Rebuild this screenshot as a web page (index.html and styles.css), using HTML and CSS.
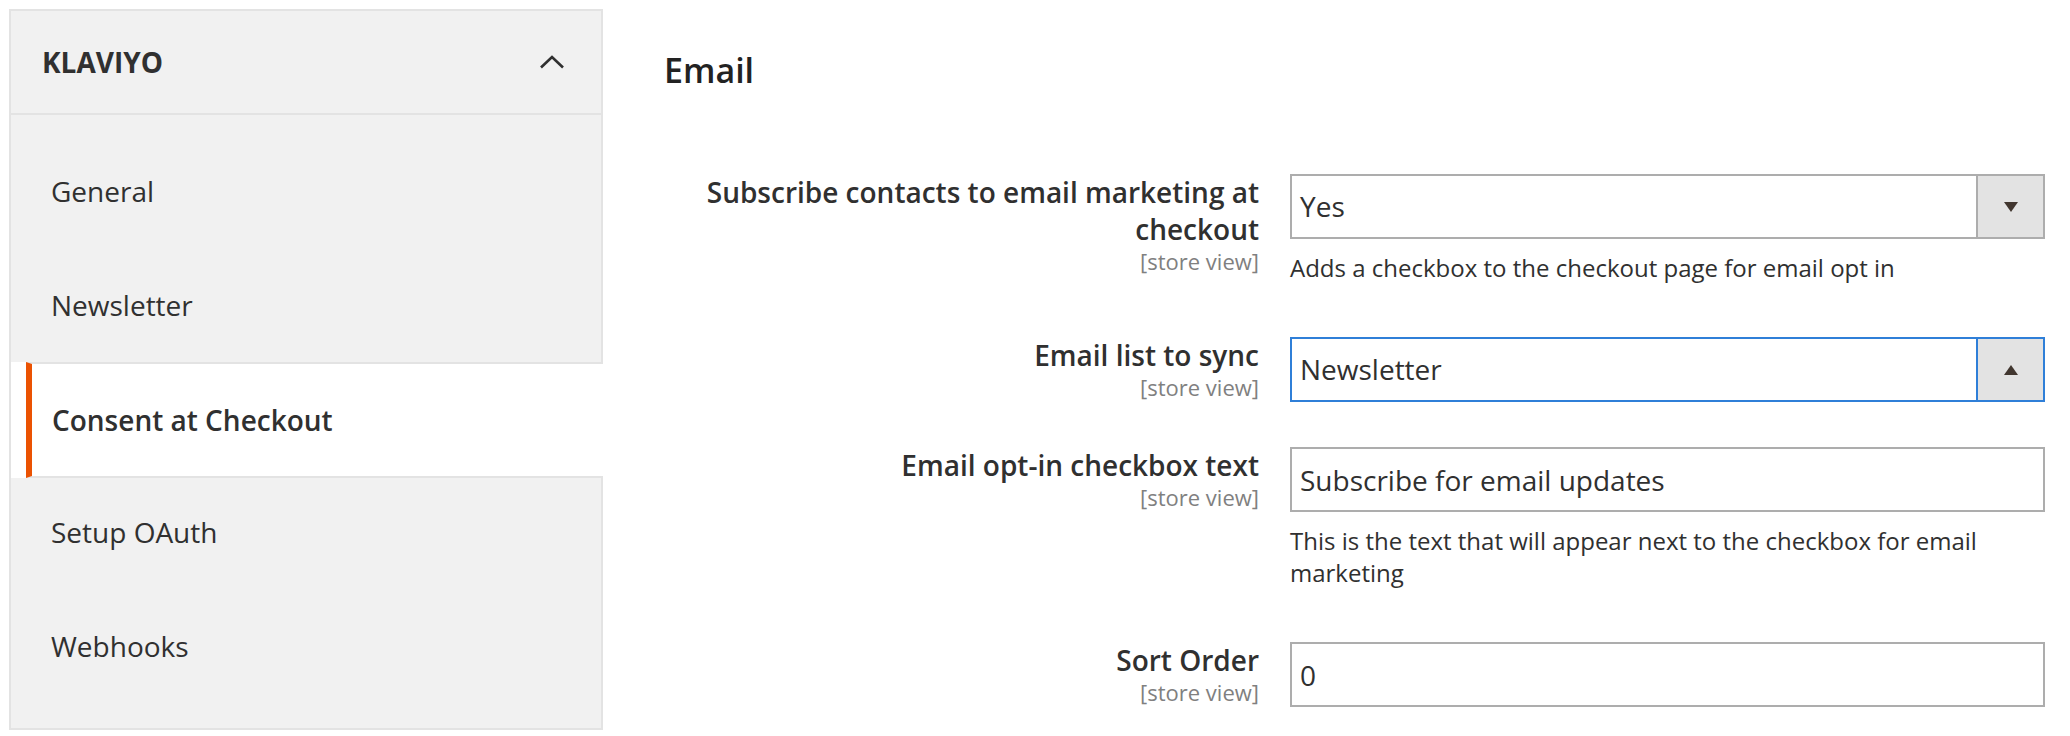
FILE: index.html
```html
<!DOCTYPE html>
<html lang="en">
<head>
    <meta charset="UTF-8">
    <meta name="viewport" content="width=device-width, initial-scale=1.0">
    <title>Configuration - Klaviyo</title>

    <link rel="stylesheet" href="styles.css">

</head>

<body>
    <div class="page">
        <aside class="nav">
            <div class="nav-group top">
                <div class="nav-title">
                    <span>Klaviyo</span>
                    <svg class="chevron" width="26" height="14" viewBox="0 0 26 14">
                        <path d="M2 12.5 L13 2 L24 12.5" fill="none" stroke="#303030" stroke-width="2.6"/>
                    </svg>
                </div>
                <ul class="nav-items">
                    <li>General</li>
                    <li>Newsletter</li>
                </ul>
            </div>
            <div class="nav-active">Consent at Checkout</div>
            <div class="nav-group bottom">
                <ul class="nav-items">
                    <li>Setup OAuth</li>
                    <li>Webhooks</li>
                </ul>
            </div>
        </aside>

        <main class="content">
            <h2>Email</h2>

            <div class="field">
                <label>Subscribe contacts to email marketing at checkout<span class="scope">[store view]</span></label>
                <div class="control">
                    <div class="select">
                        <span class="value">Yes</span>
                        <span class="arrow"><i class="tri down"></i></span>
                    </div>
                    <p class="note">Adds a checkbox to the checkout page for email opt in</p>
                </div>
            </div>

            <div class="field">
                <label>Email list to sync<span class="scope">[store view]</span></label>
                <div class="control">
                    <div class="select open">
                        <span class="value">Newsletter</span>
                        <span class="arrow"><i class="tri up"></i></span>
                    </div>
                </div>
            </div>

            <div class="field">
                <label>Email opt-in checkbox text<span class="scope">[store view]</span></label>
                <div class="control">
                    <input type="text" value="Subscribe for email updates">
                    <p class="note">This is the text that will appear next to the checkbox for email marketing</p>
                </div>
            </div>

            <div class="field">
                <label>Sort Order<span class="scope">[store view]</span></label>
                <div class="control">
                    <input type="text" value="0">
                </div>
            </div>
        </main>
    </div>
</body>
</html>
```

FILE: styles.css
```css
body{margin: 0; padding: 0; background: #fff; color: #303030; font-family: "Open Sans", "Noto Sans", sans-serif;}

.page{
    display: flex;
    align-items: flex-start;
    gap: 61px;
    padding: 9px 25px 0 9px;
}

/* left config nav */
.nav{
    width: 594px;
    flex: none;
    box-sizing: border-box;
    border-left: 2px solid #e3e3e3;
}
.nav-group{
    background-color: #f1f1f1;
    border-right: 2px solid #e3e3e3;
}
.nav-group.top{border-top: 2px solid #e3e3e3;}
.nav-group.bottom{border-bottom: 2px solid #e3e3e3; padding-bottom: 22px;}
.nav-group.bottom .nav-items li{padding-bottom: 6px;}

.nav-title{
    height: 102px;
    display: flex;
    align-items: center;
    justify-content: space-between;
    padding: 0 36px 0 31px;
    border-bottom: 2px solid #e3e3e3;
    font-size: 28px;
    font-weight: 700;
    text-transform: uppercase;
}
.nav-group.top .nav-items{padding-top: 19px;}
.nav-items{list-style: none; margin: 0; padding: 0;}
.nav-items li{
    height: 114px;
    box-sizing: border-box;
    display: flex;
    align-items: center;
    padding-left: 40px;
    font-size: 28px;
}
.nav-active{
    height: 112px;
    display: flex;
    align-items: center;
    margin-left: 15px;
    padding-left: 20px;
    background: #fff;
    border-left: 6px solid #eb5202;
    border-top: 2px solid #e3e3e3;
    border-bottom: 2px solid #e3e3e3;
    font-size: 28px;
    font-weight: 600;
}

/* form */
.content{width: 1381px;}
.content h2{
    margin: 39px 0 82px;
    font-size: 34px;
    line-height: 44px;
    font-weight: 600;
    color: #222;
}
.field{
    display: grid;
    grid-template-columns: 595px 755px;
    column-gap: 31px;
    margin-bottom: 45px;
}
.field label{
    text-align: right;
    font-size: 28px;
    line-height: 37px;
    font-weight: 600;
}
.scope{
    display: block;
    font-size: 22px;
    line-height: 27px;
    font-weight: 400;
    color: #808080;
}

.select{
    display: flex;
    height: 65px;
    box-sizing: border-box;
    border: 2px solid #adadad;
    background: #fff;
}
.select .value{
    flex: 1;
    padding-left: 8px;
    font-size: 28px;
    line-height: 61px;
}
.select .arrow{
    width: 67px;
    box-sizing: border-box;
    border-left: 2px solid #adadad;
    background-color: #e3e3e3;
    display: flex;
    align-items: center;
    justify-content: center;
}
.select.open, .select.open .arrow{border-color: #2f7fd8;}

.tri{display: block; width: 0; height: 0; border-left: 7.5px solid transparent; border-right: 7.5px solid transparent;}
.tri.down{border-top: 10px solid #41362f;}
.tri.up{border-bottom: 10px solid #41362f;}

.control input{
    display: block;
    width: 100%;
    height: 65px;
    box-sizing: border-box;
    margin: 0;
    padding: 0 8px;
    border: 2px solid #adadad;
    border-radius: 0;
    font-family: "Open Sans", "Noto Sans", sans-serif;
    font-size: 28px;
    color: #303030;
    outline: none;
}

.note{
    margin: 13px 0 8px;
    font-size: 24px;
    line-height: 32px;
}
```
